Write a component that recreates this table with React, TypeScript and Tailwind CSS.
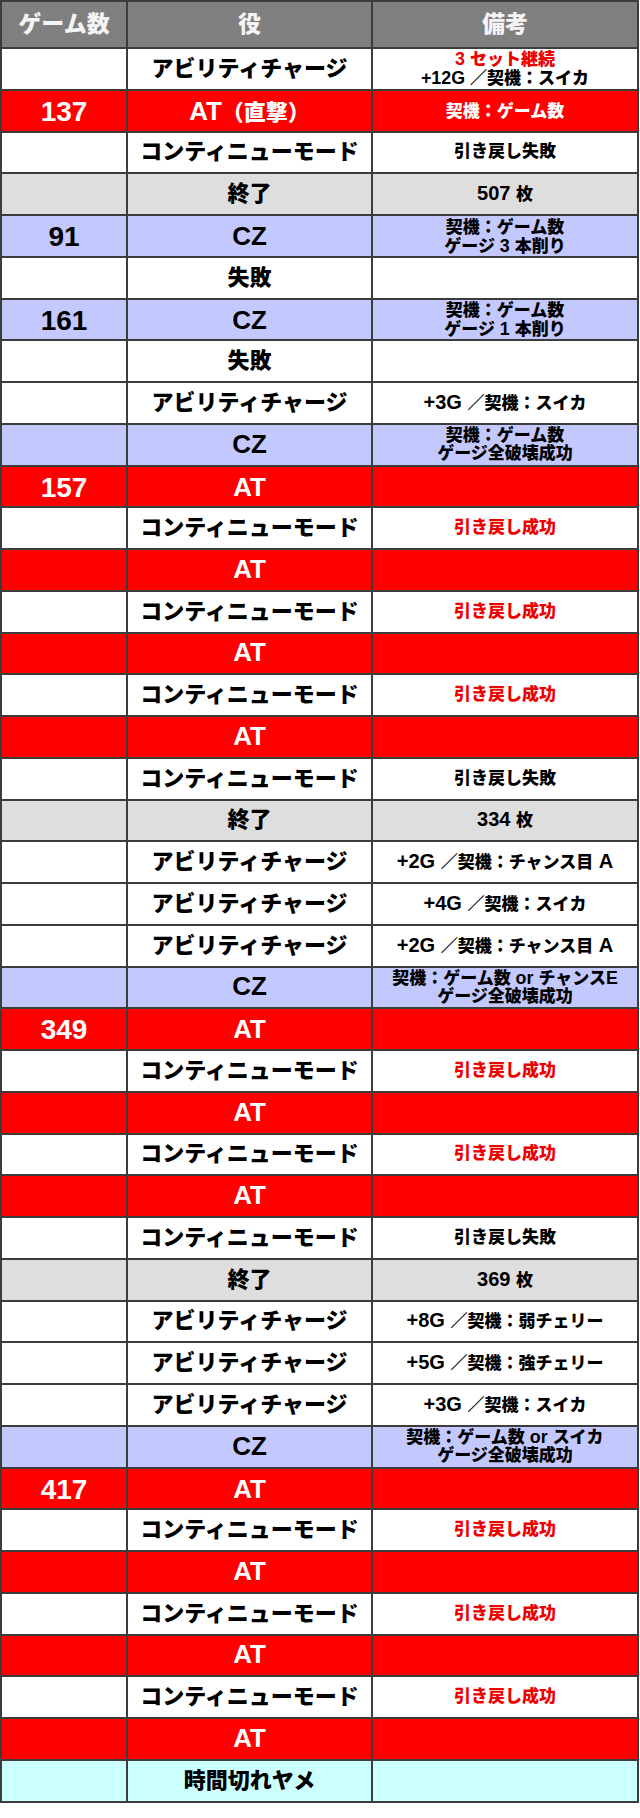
import React from 'react';

type Kind = 'white' | 'red' | 'blue' | 'gray' | 'cyan';

interface Line {
  text: string;
  red?: boolean;
}

interface Row {
  kind: Kind;
  game?: string;
  role: string;
  note?: Line[];
}

const font = "font-['Liberation_Sans','Noto_Sans_CJK_JP',sans-serif]";

const cont = (ok: boolean): Row => ({
  kind: 'white',
  role: 'コンティニューモード',
  note: [{ text: ok ? '引き戻し成功' : '引き戻し失敗', red: ok }],
});

const at = (game?: string): Row => ({ kind: 'red', game, role: 'AT' });

const charge = (text: string): Row => ({
  kind: 'white',
  role: 'アビリティチャージ',
  note: [{ text }],
});

const rows: Row[] = [
  {
    kind: 'white',
    role: 'アビリティチャージ',
    note: [{ text: '3 セット継続', red: true }, { text: '+12G ／契機：スイカ' }],
  },
  { kind: 'red', game: '137', role: 'AT（直撃）', note: [{ text: '契機：ゲーム数' }] },
  cont(false),
  { kind: 'gray', role: '終了', note: [{ text: '507 枚' }] },
  { kind: 'blue', game: '91', role: 'CZ', note: [{ text: '契機：ゲーム数' }, { text: 'ゲージ 3 本削り' }] },
  { kind: 'white', role: '失敗' },
  { kind: 'blue', game: '161', role: 'CZ', note: [{ text: '契機：ゲーム数' }, { text: 'ゲージ 1 本削り' }] },
  { kind: 'white', role: '失敗' },
  charge('+3G ／契機：スイカ'),
  { kind: 'blue', role: 'CZ', note: [{ text: '契機：ゲーム数' }, { text: 'ゲージ全破壊成功' }] },
  at('157'),
  cont(true),
  at(),
  cont(true),
  at(),
  cont(true),
  at(),
  cont(false),
  { kind: 'gray', role: '終了', note: [{ text: '334 枚' }] },
  charge('+2G ／契機：チャンス目 A'),
  charge('+4G ／契機：スイカ'),
  charge('+2G ／契機：チャンス目 A'),
  { kind: 'blue', role: 'CZ', note: [{ text: '契機：ゲーム数 or チャンスE' }, { text: 'ゲージ全破壊成功' }] },
  at('349'),
  cont(true),
  at(),
  cont(true),
  at(),
  cont(false),
  { kind: 'gray', role: '終了', note: [{ text: '369 枚' }] },
  charge('+8G ／契機：弱チェリー'),
  charge('+5G ／契機：強チェリー'),
  charge('+3G ／契機：スイカ'),
  { kind: 'blue', role: 'CZ', note: [{ text: '契機：ゲーム数 or スイカ' }, { text: 'ゲージ全破壊成功' }] },
  at('417'),
  cont(true),
  at(),
  cont(true),
  at(),
  cont(true),
  at(),
  { kind: 'cyan', role: '時間切れヤメ' },
];

const bg: Record<Kind, string> = {
  white: 'bg-white',
  red: 'bg-[#ff0000]',
  blue: 'bg-[#c3c9ff]',
  gray: 'bg-[#dedede]',
  cyan: 'bg-[#ccffff]',
};

// latin runs look taller than the kana in the source, bump them a bit
function Mixed({ text, big = true }: { text: string; big?: boolean }) {
  const parts = text.split(/([\x20-\x7E]+)/).filter(Boolean);
  return (
    <>
      {parts.map((p, i) =>
        /^[\x20-\x7E]+$/.test(p) ? (
          <span key={i} className={big ? 'text-[1.18em]' : 'text-[1.05em]'}>
            {p}
          </span>
        ) : (
          <span key={i}>{p}</span>
        ),
      )}
    </>
  );
}

function TableRow({ row }: { row: Row }) {
  const onRed = row.kind === 'red';
  const ink = onRed ? 'text-white' : 'text-black';
  const single = (row.note?.length ?? 0) < 2;

  return (
    <div className={`grid grid-cols-[126px_245px_1fr] h-[41.75px] border-b-2 border-[#3c3c3c] ${bg[row.kind]}`}>
      <div className={`flex items-center justify-center border-r-2 border-[#3c3c3c] text-[28px] font-bold ${ink}`}>
        {row.game}
      </div>
      <div className={`flex items-center justify-center border-r-2 border-[#3c3c3c] text-[22px] leading-none font-black ${ink}`}>
        <span>
          <Mixed text={row.role} />
        </span>
      </div>
      <div className="flex flex-col items-center justify-center text-[17px] leading-[18px] font-black">
        {row.note?.map((line, i) => (
          <span
            key={i}
            className={line.red ? 'text-[#ee0000]' : onRed ? 'text-white' : 'text-black'}
          >
            <Mixed text={line.text} big={single} />
          </span>
        ))}
      </div>
    </div>
  );
}

export default function App() {
  return (
    <div className={`w-[640px] bg-white ${font}`}>
      <div className="w-[639px] border-l-2 border-t-2 border-r-2 border-[#3c3c3c]">
        <div className="grid grid-cols-[126px_245px_1fr] h-[47px] border-b-2 border-[#3c3c3c] bg-[#7f7f7f] text-[23px] font-black text-[#f4f4f4]">
          <div className="flex items-center justify-center border-r-2 border-[#3c3c3c]">ゲーム数</div>
          <div className="flex items-center justify-center border-r-2 border-[#3c3c3c]">役</div>
          <div className="flex items-center justify-center">備考</div>
        </div>
        {rows.map((row, i) => (
          <TableRow key={i} row={row} />
        ))}
      </div>
    </div>
  );
}
